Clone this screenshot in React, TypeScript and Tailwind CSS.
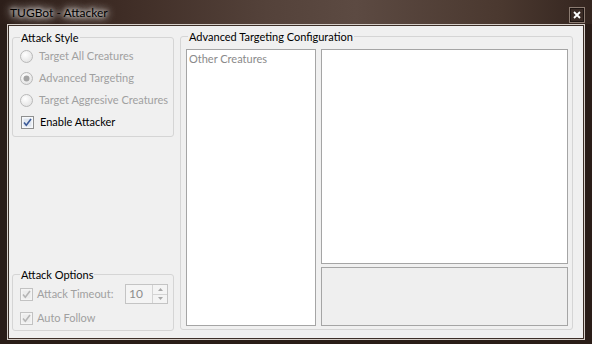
import React from "react"

const font = "font-['Lato','Noto_Sans',sans-serif]"

function Radio({ checked }: { checked?: boolean }) {
    return (
        <svg width="13" height="13" viewBox="0 0 13 13" className="shrink-0">
            <defs>
                <radialGradient id="rg" cx="40%" cy="35%" r="70%">
                    <stop offset="0%" stopColor="#ffffff" />
                    <stop offset="100%" stopColor="#e2e2e2" />
                </radialGradient>
            </defs>
            <circle cx="6.5" cy="6.5" r="6" fill="url(#rg)" stroke="#b9b9b9" />
            {checked && <circle cx="6.5" cy="6.5" r="3" fill="#a3a3a3" />}
        </svg>
    )
}

function Check({ disabled }: { disabled?: boolean }) {
    return (
        <svg width="13" height="13" viewBox="0 0 13 13" className="shrink-0">
            <rect x="0.5" y="0.5" width="12" height="12" fill={disabled ? "#f4f4f4" : "#f6f8fb"} stroke={disabled ? "#c2c2c2" : "#8e8f8f"} />
            <rect x="2.5" y="2.5" width="8" height="8" fill={disabled ? "#ececec" : "#dfe6ef"} stroke="none" />
            <path
                d="M3 6.5 L5.3 9.2 L10 3"
                fill="none"
                stroke={disabled ? "#b5b5b5" : "#3c5a98"}
                strokeWidth="1.6"
            />
        </svg>
    )
}

function Spinner() {
    return (
        <div className="ml-auto flex h-[20px] w-[43px] shrink-0 border border-[#c4c4c4] bg-[#f4f4f4]">
            <span className="flex-1 pl-[3px] text-[12px] leading-[18px] text-[#8d8d8d]">10</span>
            <div className="flex w-[15px] flex-col border-l border-[#d4d4d4]">
                <div className="flex flex-1 items-center justify-center border-b border-[#d4d4d4]">
                    <svg width="5" height="3" viewBox="0 0 5 3"><path d="M0 3 L2.5 0 L5 3Z" fill="#a8a8a8" /></svg>
                </div>
                <div className="flex flex-1 items-center justify-center">
                    <svg width="5" height="3" viewBox="0 0 5 3"><path d="M0 0 L2.5 3 L5 0Z" fill="#a8a8a8" /></svg>
                </div>
            </div>
        </div>
    )
}

export default function App() {
    return (
        <div className={`flex h-[344px] w-[592px] flex-col overflow-hidden whitespace-nowrap bg-[#2a1d18] text-[11px] ${font}`}>
            {/* title bar */}
            <div className="flex h-[24px] shrink-0 items-start bg-[linear-gradient(90deg,#2c1e19_0%,#3e2c25_20%,#54423a_45%,#5c4a42_60%,#4a382f_85%,#34251f_100%)]">
                <span className="ml-[10px] mt-[5px] leading-[16px] text-[12px] text-black [text-shadow:0_0_4px_#fff,0_0_8px_#fff,0_0_12px_#e8e0dc]">
                    TUGBot - Attacker
                </span>
                <div className="ml-auto mr-[7px] mt-[7px] flex h-[16px] w-[16px] items-center justify-center border border-[#8c7c72] bg-[#3a2b25] shadow-[inset_0_0_0_1px_#1e1512]">
                    <svg width="8" height="8" viewBox="0 0 8 8">
                        <path d="M1 1 L7 7 M7 1 L1 7" stroke="#ffffff" strokeWidth="1.8" />
                    </svg>
                </div>
            </div>

            {/* window frame */}
            <div className="ml-[7px] h-[316px] w-[578px] border border-[#d6cfc9]">
                <div className="flex h-full border border-[#3d2f28] bg-[#f0f0f0] pl-[3px] text-black">
                    {/* left column */}
                    <div className="mt-[4px] flex h-[301px] w-[162px] shrink-0 flex-col justify-between">
                        <fieldset className="h-[107px] min-w-0 rounded-[3px] border border-[#d5d5d5] pl-[7px]">
                            <legend className="px-[1px] leading-[15px]">Attack Style</legend>
                            <div className="flex h-[22px] items-center gap-[6px] text-[#a0a0a0]">
                                <Radio />
                                <span>Target All Creatures</span>
                            </div>
                            <div className="flex h-[22px] items-center gap-[6px] text-[#a0a0a0]">
                                <Radio checked />
                                <span>Advanced Targeting</span>
                            </div>
                            <div className="flex h-[22px] items-center gap-[6px] text-[#a0a0a0]">
                                <Radio />
                                <span>Target Aggresive Creatures</span>
                            </div>
                            <div className="flex h-[22px] items-center gap-[6px] pl-[1px]">
                                <Check />
                                <span>Enable Attacker</span>
                            </div>
                        </fieldset>

                        <fieldset className="h-[64px] min-w-0 rounded-[3px] border border-[#d5d5d5] pl-[7px] pr-[5px]">
                            <legend className="px-[1px] leading-[15px]">Attack Options</legend>
                            <div className="flex h-[24px] items-center gap-[4px] text-[#a0a0a0]">
                                <Check disabled />
                                <span>Attack Timeout:</span>
                                <Spinner />
                            </div>
                            <div className="flex h-[24px] items-center gap-[4px] text-[#a0a0a0]">
                                <Check disabled />
                                <span>Auto Follow</span>
                            </div>
                        </fieldset>
                    </div>

                    {/* right group */}
                    <fieldset className="ml-[6px] mt-[3px] h-[301px] w-[393px] min-w-0 rounded-[3px] border border-[#d5d5d5] pl-[5px] pr-[4px] pt-[5px]">
                        <legend className="ml-[2px] px-[1px] leading-[15px]">Advanced Targeting Configuration</legend>
                        <div className="flex h-[277px] gap-[5px]">
                            <div className="w-[130px] border border-[#a5a5a5] bg-white pl-[2px] leading-[17px] text-[#8a8a8a]">
                                Other Creatures
                            </div>
                            <div className="flex w-[247px] flex-col gap-[3px]">
                                <div className="h-[215px] border border-[#a5a5a5] bg-white" />
                                <div className="h-[59px] border border-[#a5a5a5] bg-[#efefef]" />
                            </div>
                        </div>
                    </fieldset>
                </div>
            </div>
        </div>
    )
}
